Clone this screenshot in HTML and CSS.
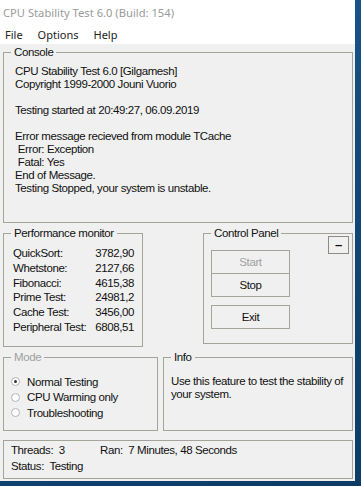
FILE: index.html
```html
<!DOCTYPE html>
<html>
<head>
<meta charset="utf-8">
<title>CPU Stability Test 6.0</title>
<link rel="stylesheet" href="styles.css">
</head>
<body>
<div class="window">
  <div class="titlebar">CPU Stability Test 6.0 (Build: 154)</div>
  <div class="menubar"><span class="menu">File</span><span class="menu">Options</span><span class="menu">Help</span></div>
  <div class="client">
    <fieldset class="group console">
      <legend>Console</legend>
      <div class="console-text">CPU Stability Test 6.0 [Gilgamesh]
Copyright 1999-2000 Jouni Vuorio

Testing started at 20:49:27, 06.09.2019

Error message recieved from module TCache
 Error: Exception
 Fatal: Yes
End of Message.
Testing Stopped, your system is unstable.</div>
    </fieldset>

    <div class="mid">
      <fieldset class="group perf">
        <legend>Performance monitor</legend>
        <div class="perf-grid">
          <span>QuickSort:</span><span class="val">3782,90</span>
          <span>Whetstone:</span><span class="val">2127,66</span>
          <span>Fibonacci:</span><span class="val">4615,38</span>
          <span>Prime Test:</span><span class="val">24981,2</span>
          <span>Cache Test:</span><span class="val">3456,00</span>
          <span>Peripheral Test:</span><span class="val">6808,51</span>
        </div>
      </fieldset>
      <fieldset class="group control">
        <legend>Control Panel</legend>
        <div class="control-body">
          <div class="buttons">
            <div class="btn disabled">Start</div>
            <div class="btn stop">Stop</div>
            <div class="btn exit">Exit</div>
          </div>
          <div class="min-btn">–</div>
        </div>
      </fieldset>
    </div>

    <div class="lower">
      <fieldset class="group mode">
        <legend class="dim">Mode</legend>
        <div class="radios">
          <div class="radio-row"><span class="radio checked"></span>Normal Testing</div>
          <div class="radio-row"><span class="radio"></span>CPU Warming only</div>
          <div class="radio-row"><span class="radio"></span>Troubleshooting</div>
        </div>
      </fieldset>
      <fieldset class="group info">
        <legend>Info</legend>
        <div class="info-text">Use this feature to test the stability of your system.</div>
      </fieldset>
    </div>

    <div class="status">
      <div class="status-row"><span class="threads">Threads:  3</span><span>Ran:  7 Minutes, 48 Seconds</span></div>
      <div class="status-row"><span>Status:  Testing</span></div>
    </div>
  </div>
</div>
</body>
</html>
```

FILE: styles.css
```css
html, body {
  margin: 0;
  padding: 0;
}

body {
  width: 361px;
  height: 486px;
  overflow: hidden;
  background: linear-gradient(160deg, #1b5c92 0%, #124a7c 45%, #0d3b66 100%);
  font-family: "Liberation Sans", Arial, sans-serif;
  font-size: 11.5px;
  letter-spacing: -0.4px;
  color: #111;
}

.window {
  width: 355px;
  height: 481px;
  background: #f0f0f0;
  display: flex;
  flex-direction: column;
}

.titlebar {
  height: 26px;
  line-height: 26px;
  background: #fff;
  color: #9a9a9a;
  font-family: "Noto Sans", "Open Sans", sans-serif;
  font-size: 11.2px;
  letter-spacing: 0;
  padding-left: 3px;
  white-space: nowrap;
}

.menubar {
  height: 18px;
  line-height: 18px;
  background: #fff;
  display: flex;
  font-family: "Noto Sans", "Open Sans", sans-serif;
  font-size: 11px;
  letter-spacing: 0;
  color: #222;
  padding-left: 5px;
}

.menu {
  margin-right: 15px;
}

.client {
  padding: 0 2px 0 3px;
  display: flex;
  flex-direction: column;
}

.group {
  margin: 0;
  padding: 0;
  border: 1px solid #a6a29c;
  box-sizing: border-box;
  min-width: 0;
}

.group legend {
  padding: 0 3px;
  margin-left: 7px;
  line-height: 13px;
  font-size: 11.5px;
}

.dim {
  color: #a0a0a0;
}

/* Console */
.console {
  margin-top: 2px;
  height: 177px;
}

.console-text {
  white-space: pre;
  line-height: 13px;
  padding: 6px 0 0 11px;
}

/* Middle row */
.mid {
  display: flex;
  justify-content: space-between;
  align-items: flex-start;
  margin-top: 4px;
}

.perf {
  width: 140px;
  height: 120px;
}

.perf-grid {
  display: grid;
  grid-template-columns: 1fr auto;
  line-height: 14.8px;
  padding: 6px 8px 0 9px;
  white-space: nowrap;
}

.val {
  text-align: right;
}

.control {
  width: 150px;
  height: 117px;
}

.control-body {
  display: flex;
  align-items: flex-start;
}

.buttons {
  display: flex;
  flex-direction: column;
  margin-left: 7px;
  margin-top: 10px;
}

.btn {
  width: 79px;
  height: 24px;
  box-sizing: border-box;
  border: 1px solid #a6a29c;
  background: #f0f0f0;
  text-align: center;
  line-height: 22px;
}

.btn.disabled {
  color: #a0a0a0;
}

.btn.stop {
  margin-top: -1px;
}

.btn.exit {
  margin-top: 8px;
}

.min-btn {
  width: 21px;
  height: 18px;
  box-sizing: border-box;
  border: 1px solid #8e8a84;
  margin-left: auto;
  margin-right: 3px;
  margin-top: -4px;
  text-align: center;
  line-height: 16px;
  font-weight: bold;
  font-size: 13px;
  letter-spacing: 0;
}

/* Lower row */
.lower {
  display: flex;
  justify-content: space-between;
  margin-top: 4px;
}

.mode {
  width: 155px;
  height: 80px;
}

.radios {
  padding: 10px 0 0 7px;
}

.radio-row {
  display: flex;
  align-items: center;
  height: 15.5px;
}

.radio {
  width: 9px;
  height: 9px;
  box-sizing: border-box;
  border: 1px solid #b4b4b4;
  border-radius: 50%;
  background: #fff;
  margin-right: 7px;
  display: flex;
  align-items: center;
  justify-content: center;
}

.radio.checked::after {
  content: "";
  width: 3px;
  height: 3px;
  border-radius: 50%;
  background: #333;
}

.info {
  width: 190px;
  height: 80px;
}

.info-text {
  padding: 11px 4px 0 7px;
  line-height: 12.5px;
}

/* Status */
.status {
  margin-top: 9px;
  height: 39px;
  box-sizing: border-box;
  border: 1px solid #a6a29c;
  padding: 1px 0 0 7px;
  line-height: 16px;
}

.status-row {
  display: flex;
  white-space: pre;
}

.threads {
  width: 89px;
}
```
